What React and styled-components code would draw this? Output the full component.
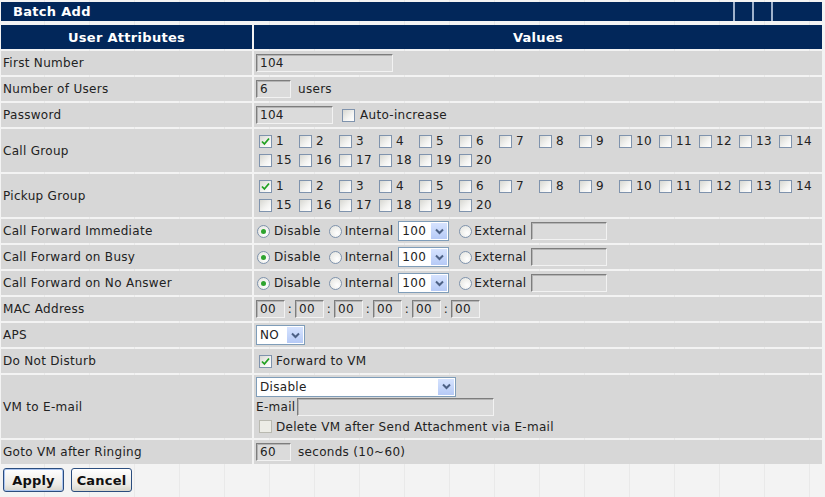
import React from "react";
import styled, { createGlobalStyle } from "styled-components";

const GlobalStyle = createGlobalStyle`
  html, body {
    margin: 0;
    padding: 0;
    background-color: #f3f3f3;
    background-image:
      repeating-linear-gradient(90deg, transparent 0 44px, #e9e9e9 44px 45px);
  }
  body {
    font-family: "DejaVu Sans", Verdana, sans-serif;
    font-size: 12px;
    letter-spacing: 0.3px;
    color: #222;
  }
`;

const Frame = styled.div`
  width: 821px;
  margin-left: 1px;
  padding-top: 2px;
`;

const TitleBar = styled.div`
  display: flex;
  height: 19px;
  background: #02275a;
`;

const TitleText = styled.div`
  flex: 1;
  color: #fff;
  font-weight: bold;
  font-size: 13px;
  line-height: 19px;
  padding-left: 12px;
`;

const TitleCell = styled.div`
  width: ${(p) => p.w}px;
  border-left: 2px solid #9fb2cc;
`;

const Grid = styled.div`
  display: grid;
  grid-template-columns: 251px 1fr;
  gap: 2px;
  margin-top: 4px;
`;

const HeadCell = styled.div`
  height: 24px;
  background: #02275a;
  color: #fff;
  font-weight: bold;
  font-size: 13px;
  display: flex;
  align-items: center;
  justify-content: center;
`;

const Label = styled.div`
  height: ${(p) => p.h || 24}px;
  background: #d7d7d7;
  display: flex;
  align-items: center;
  padding-left: 2px;
`;

const Value = styled.div`
  height: ${(p) => p.h || 24}px;
  background: #d7d7d7;
  display: flex;
  flex-direction: ${(p) => (p.stack ? "column" : "row")};
  align-items: ${(p) => (p.stack ? "flex-start" : "center")};
  justify-content: ${(p) => (p.stack ? "center" : "flex-start")};
  padding-left: 2px;
`;

const Line = styled.div`
  display: flex;
  align-items: center;
  height: ${(p) => p.h || 20}px;
`;

const TextBox = styled.div`
  box-sizing: border-box;
  width: ${(p) => p.w}px;
  height: 18px;
  background: #dbdbdb;
  border-top: 1px solid #7d7d7d;
  border-left: 1px solid #7d7d7d;
  border-right: 1px solid #f2f2f2;
  border-bottom: 1px solid #f2f2f2;
  box-shadow: inset 1px 1px 0 #b4b4b4;
  padding-left: 3px;
  line-height: 16px;
  margin-left: ${(p) => p.ml || 0}px;
`;

const Note = styled.span`
  margin-left: ${(p) => p.ml || 0}px;
`;

const Box = styled.span`
  box-sizing: border-box;
  display: inline-flex;
  align-items: center;
  justify-content: center;
  width: 13px;
  height: 13px;
  border: 1px solid ${(p) => (p.dim ? "#b9b9b0" : "#7f93ad")};
  background: ${(p) =>
    p.dim
      ? "#ecece6"
      : "linear-gradient(135deg, #d8d8d2 0%, #f4f4f2 60%, #ffffff 100%)"};
  margin: 0 4px 0 ${(p) => (p.ml == null ? 3 : p.ml)}px;
  flex-shrink: 0;
`;

const Check = ({ on, dim, ml }) => (
  <Box dim={dim} ml={ml}>
    {on && (
      <svg width="9" height="9" viewBox="0 0 9 9">
        <path d="M1 4.5 L3.4 7 L8 1.5" fill="none" stroke="#21a121" strokeWidth="1.8" />
      </svg>
    )}
  </Box>
);

const Dot = styled.span`
  box-sizing: border-box;
  display: inline-flex;
  align-items: center;
  justify-content: center;
  width: 13px;
  height: 13px;
  border-radius: 50%;
  border: 1px solid #7f93ad;
  background: radial-gradient(circle at 65% 65%, #ffffff 0%, #e2e2dc 100%);
  margin: 0 ${(p) => p.mr}px 0 ${(p) => p.ml}px;
  flex-shrink: 0;
  &::after {
    content: "";
    width: 5px;
    height: 5px;
    border-radius: 50%;
    background: ${(p) => (p.on ? "#2ea42e" : "transparent")};
  }
`;

const Select = styled.div`
  box-sizing: border-box;
  display: flex;
  align-items: center;
  width: ${(p) => p.w}px;
  height: 20px;
  background: #fff;
  border: 1px solid #7f9db9;
  margin-left: ${(p) => p.ml || 0}px;
`;

const SelectText = styled.span`
  flex: 1;
  padding-left: 3px;
`;

const SelectButton = styled.span`
  width: 16px;
  height: 16px;
  margin-right: 1px;
  background: linear-gradient(#d6e3fe, #b6caf6);
  display: flex;
  align-items: center;
  justify-content: center;
`;

const Dropdown = ({ w, ml, children }) => (
  <Select w={w} ml={ml}>
    <SelectText>{children}</SelectText>
    <SelectButton>
      <svg width="9" height="7" viewBox="0 0 9 7">
        <path d="M1 1.5 L4.5 5 L8 1.5" fill="none" stroke="#4d6185" strokeWidth="2" />
      </svg>
    </SelectButton>
  </Select>
);

const Groups = styled.div`
  display: grid;
  grid-template-columns: repeat(14, 40px);
  row-gap: 5px;
`;

const GroupItem = styled.span`
  display: flex;
  align-items: center;
`;

const Colon = styled.span`
  width: 10px;
  text-align: center;
`;

const ButtonRow = styled.div`
  display: flex;
  gap: 7px;
  padding: 4px 0 0 2px;
`;

const Button = styled.button`
  box-sizing: border-box;
  width: 61px;
  height: 24px;
  font-family: "DejaVu Sans", Verdana, sans-serif;
  font-size: 13px;
  font-weight: bold;
  letter-spacing: 0.2px;
  color: #111;
  border: 1px solid #2b4d7e;
  border-radius: 3px;
  background: linear-gradient(#ffffff, #ecebe6 70%, #d8d6cc);
  box-shadow: ${(p) => (p.primary ? "inset 0 0 0 1px #aac4f0" : "none")};
  padding: 0;
`;

const numbers = Array.from({ length: 20 }, (_, i) => i + 1);

const GroupBoxes = () => (
  <Groups>
    {numbers.map((n) => (
      <GroupItem key={n}>
        <Check on={n === 1} />
        {n}
      </GroupItem>
    ))}
  </Groups>
);

const Forward = () => (
  <>
    <Dot on ml={1} mr={4} />
    Disable
    <Dot ml={8} mr={3} />
    Internal
    <Dropdown w={51} ml={5}>100</Dropdown>
    <Dot ml={10} mr={2} />
    External
    <TextBox w={76} ml={5} />
  </>
);

export default function App() {
  return (
    <>
      <GlobalStyle />
      <Frame>
        <TitleBar>
          <TitleText>Batch Add</TitleText>
          <TitleCell w={17} />
          <TitleCell w={17} />
          <TitleCell w={49} />
        </TitleBar>
        <Grid>
          <HeadCell>User Attributes</HeadCell>
          <HeadCell>Values</HeadCell>

          <Label>First Number</Label>
          <Value><TextBox w={137}>104</TextBox></Value>

          <Label>Number of Users</Label>
          <Value>
            <TextBox w={35}>6</TextBox>
            <Note ml={7}>users</Note>
          </Value>

          <Label>Password</Label>
          <Value>
            <TextBox w={77}>104</TextBox>
            <Check ml={9} />
            <Note ml={1}>Auto-increase</Note>
          </Value>

          <Label h={43}>Call Group</Label>
          <Value h={43}><GroupBoxes /></Value>

          <Label h={43}>Pickup Group</Label>
          <Value h={43}><GroupBoxes /></Value>

          <Label>Call Forward Immediate</Label>
          <Value><Forward /></Value>

          <Label>Call Forward on Busy</Label>
          <Value><Forward /></Value>

          <Label>Call Forward on No Answer</Label>
          <Value><Forward /></Value>

          <Label>MAC Address</Label>
          <Value>
            {[0, 1, 2, 3, 4, 5].map((i) => (
              <React.Fragment key={i}>
                {i > 0 && <Colon>:</Colon>}
                <TextBox w={29}>00</TextBox>
              </React.Fragment>
            ))}
          </Value>

          <Label>APS</Label>
          <Value><Dropdown w={49}>NO</Dropdown></Value>

          <Label>Do Not Disturb</Label>
          <Value>
            <Check on />
            Forward to VM
          </Value>

          <Label h={63}>VM to E-mail</Label>
          <Value h={63} stack>
            <Line><Dropdown w={200}>Disable</Dropdown></Line>
            <Line>
              E-mail
              <TextBox w={197} ml={2} />
            </Line>
            <Line>
              <Check dim />
              Delete VM after Send Attachment via E-mail
            </Line>
          </Value>

          <Label>Goto VM after Ringing</Label>
          <Value>
            <TextBox w={35}>60</TextBox>
            <Note ml={7}>seconds (10~60)</Note>
          </Value>
        </Grid>
        <ButtonRow>
          <Button primary>Apply</Button>
          <Button>Cancel</Button>
        </ButtonRow>
      </Frame>
    </>
  );
}
